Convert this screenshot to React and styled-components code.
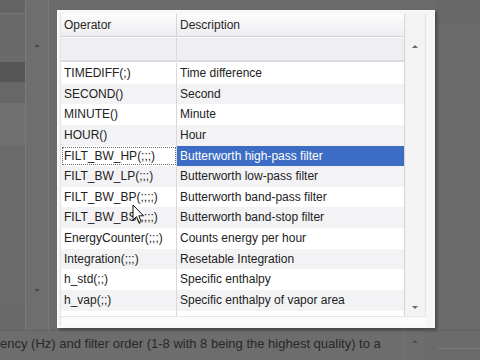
import React from "react";
import styled, { createGlobalStyle } from "styled-components";

const Global = createGlobalStyle`
  html, body { margin: 0; padding: 0; background: #6b6b6b; }
  body { font-family: "Liberation Sans", Arial, sans-serif; }
`;

const Screen = styled.div`
  position: relative;
  width: 480px;
  height: 360px;
  overflow: hidden;
  background: #6b6b6b;
  display: grid;
  grid-template-rows: 330px 30px;
`;

const Work = styled.div`
  display: flex;
`;

const SideList = styled.div`
  width: 25px;
  display: flex;
  flex-direction: column;
  background: #696969;
`;

const SideBand = styled.div`
  height: ${(p) => p.$h}px;
  background: ${(p) => p.$bg};
  border-bottom: ${(p) => (p.$line ? "1px solid #767676" : "none")};
`;

const SideScroll = styled.div`
  width: 22px;
  border-left: 1px solid #7a7a7a;
  border-right: 1px solid #7a7a7a;
  background: #6e6e6e;
  display: flex;
  flex-direction: column;
  justify-content: space-between;
  align-items: center;
  padding: 44px 0 38px;
`;

const Tri = styled.div`
  width: 0;
  height: 0;
  border-left: ${(p) => p.$w}px solid transparent;
  border-right: ${(p) => p.$w}px solid transparent;
  ${(p) =>
    p.$down
      ? `border-top: ${p.$h}px solid ${p.$c};`
      : `border-bottom: ${p.$h}px solid ${p.$c};`}
`;

const Rest = styled.div`
  flex: 1;
  display: flex;
  justify-content: flex-end;
`;

const RightEdge = styled.div`
  width: 45px;
  border-top: 23px solid #686868;
`;

const Bottom = styled.div`
  display: flex;
  align-items: center;
  border-top: 1px solid #626262;
  background: #6d6d6d;
`;

const BottomText = styled.div`
  flex: 1;
  font-size: 13px;
  color: #282828;
  white-space: nowrap;
  overflow: hidden;
  padding-bottom: 4px;
`;

const BottomScroll = styled.div`
  width: 22px;
  height: 100%;
  border-left: 1px solid #747474;
  display: flex;
  justify-content: center;
  padding-top: 9px;
  box-sizing: border-box;
`;

const BottomRight = styled.div`
  width: 55px;
  height: 100%;
  box-sizing: border-box;
  background: #6b6b6b;
  position: relative;
  &:after {
    content: "";
    position: absolute;
    left: 13px;
    right: 0;
    top: 17px;
    border-top: 1px solid #7c7c7c;
  }
`;

/* Popup */
const Popup = styled.div`
  position: absolute;
  left: 57px;
  top: 10px;
  width: 378px;
  height: 318px;
  box-sizing: border-box;
  background: #f6f6f6;
  border: 1px solid #fbfbfb;
  box-shadow: 2px 2px 3px rgba(0, 0, 0, 0.35);
  padding: 3px 8px 1px 2px;
  display: flex;
  flex-direction: column;
`;

const Grid = styled.div`
  flex: 1;
  display: flex;
  flex-direction: column;
  background: #ffffff;
  border-left: 1px solid #e2e2e2;
  overflow: hidden;
`;

const GridMain = styled.div`
  height: 302px;
  display: flex;
`;

const Table = styled.div`
  flex: 1;
  display: flex;
  flex-direction: column;
  overflow: hidden;
  border-right: 1px solid #d4d4d4;
`;

const HeaderRow = styled.div`
  display: grid;
  grid-template-columns: 116px 1fr;
  height: 22px;
  background: linear-gradient(#fcfcfd, #eeeef1);
  border-bottom: 1px solid #d2d2d6;
  flex-shrink: 0;
`;

const HeadCell = styled.div`
  font-size: 12px;
  color: #262626;
  line-height: 22px;
  padding-left: 3px;
  border-right: ${(p) => (p.$last ? "none" : "1px solid #d6d6da")};
`;

const FilterRow = styled.div`
  display: grid;
  grid-template-columns: 116px 1fr;
  height: 22px;
  background: #efeff3;
  border-top: 1px solid #fafafa;
  border-bottom: 2px solid #dcdce0;
  flex-shrink: 0;
`;

const FilterCell = styled.div`
  border-right: ${(p) => (p.$last ? "none" : "1px solid #d8d8dc")};
`;

const Rows = styled.div`
  flex: 1;
  overflow: hidden;
  padding-top: 1px;
`;

const Row = styled.div`
  display: grid;
  grid-template-columns: 116px 1fr;
  height: 20.65px;
  background: ${(p) => (p.$alt ? "#f3f3f5" : "#ffffff")};
`;

const Cell = styled.div`
  font-size: 12px;
  line-height: 20.65px;
  padding-left: 3px;
  white-space: nowrap;
  overflow: hidden;
  color: ${(p) => (p.$sel ? "#ffffff" : "#222222")};
  background: ${(p) => (p.$sel ? "#3c6cc4" : "transparent")};
  border-right: ${(p) => (p.$first ? "1px solid #d9d9dd" : "none")};
  box-sizing: border-box;
  ${(p) =>
    p.$focus
      ? `outline: 1px dotted #6a6a6a; outline-offset: -2px;`
      : ""}
`;

const VScroll = styled.div`
  width: 21px;
  background: #f3f3f3;
  border-right: 1px solid #e4e4e4;
  display: flex;
  flex-direction: column;
  align-items: center;
  justify-content: space-between;
  padding: 31px 0 7px;
  box-sizing: border-box;
`;

const HStrip = styled.div`
  flex: 1;
  background: #fbfbfb;
  border-top: 1px solid #e6e6e6;
`;

const Cursor = styled.svg`
  position: absolute;
  left: 132px;
  top: 204px;
  width: 13px;
  height: 21px;
`;

const rows = [
  ["TIMEDIFF(;)", "Time difference"],
  ["SECOND()", "Second"],
  ["MINUTE()", "Minute"],
  ["HOUR()", "Hour"],
  ["FILT_BW_HP(;;;)", "Butterworth high-pass filter"],
  ["FILT_BW_LP(;;;)", "Butterworth low-pass filter"],
  ["FILT_BW_BP(;;;;)", "Butterworth band-pass filter"],
  ["FILT_BW_BS(;;;;)", "Butterworth band-stop filter"],
  ["EnergyCounter(;;;)", "Counts energy per hour"],
  ["Integration(;;;)", "Resetable Integration"],
  ["h_std(;;)", "Specific enthalpy"],
  ["h_vap(;;)", "Specific enthalpy of vapor area"],
  ["h_liq(;;)", "Specific enthalpy of liquid area"],
];

const SELECTED = 4;

export default function App() {
  return (
    <>
      <Global />
      <Screen>
        <Work>
          <SideList>
            <SideBand $h={13} $bg="#646464" $line />
            <SideBand $h={48} $bg="#6a6a6a" />
            <SideBand $h={20} $bg="#565656" />
            <SideBand $h={21} $bg="#676767" />
            <SideBand $h={42} $bg="#707070" />
            <SideBand $h={160} $bg="#6b6b6b" />
          </SideList>
          <SideScroll>
            <Tri $w={3} $h={3} $c="#4a4a4a" />
            <Tri $w={3} $h={3} $c="#4a4a4a" $down />
          </SideScroll>
          <Rest>
            <RightEdge />
          </Rest>
        </Work>
        <Bottom>
          <BottomText>
            ency (Hz) and filter order (1-8 with 8 being the highest quality) to a
          </BottomText>
          <BottomScroll>
            <Tri $w={3} $h={3} $c="#4e4e4e" />
          </BottomScroll>
          <BottomRight />
        </Bottom>

        <Popup>
          <Grid>
            <GridMain>
              <Table>
                <HeaderRow>
                  <HeadCell>Operator</HeadCell>
                  <HeadCell $last>Description</HeadCell>
                </HeaderRow>
                <FilterRow>
                  <FilterCell />
                  <FilterCell $last />
                </FilterRow>
                <Rows>
                  {rows.map(([op, desc], i) => (
                    <Row key={op} $alt={i % 2 === 1}>
                      <Cell $first $focus={i === SELECTED}>
                        {op}
                      </Cell>
                      <Cell $sel={i === SELECTED}>{desc}</Cell>
                    </Row>
                  ))}
                </Rows>
              </Table>
              <VScroll>
                <Tri $w={3} $h={3} $c="#6a6a6a" />
                <Tri $w={3} $h={3} $c="#6a6a6a" $down />
              </VScroll>
            </GridMain>
            <HStrip />
          </Grid>
        </Popup>

        <Cursor viewBox="0 0 13 21">
          <path
            d="M1 1 L1 16 L4.5 12.5 L7 18.5 L9.2 17.6 L6.8 11.8 L11.5 11.8 Z"
            fill="#ffffff"
            stroke="#111111"
            strokeWidth="1"
            strokeLinejoin="round"
          />
        </Cursor>
      </Screen>
    </>
  );
}
